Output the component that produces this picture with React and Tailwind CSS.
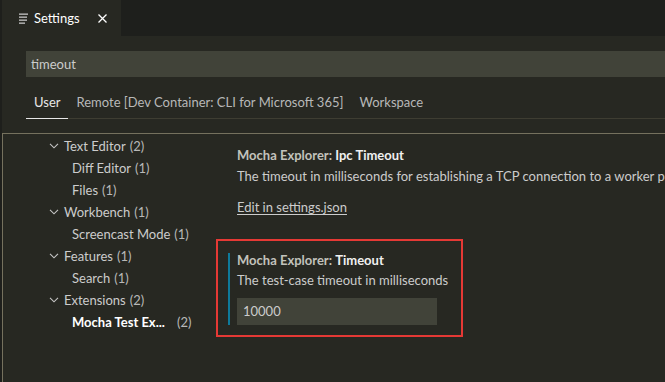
import React from "react";

const font = { fontFamily: 'Lato, "Noto Sans", sans-serif' };

function Chevron() {
  return (
    <svg width="10" height="6" viewBox="0 0 10 6" className="shrink-0">
      <path d="M1 0.8 L5 4.8 L9 0.8" fill="none" stroke="#c5c5c5" strokeWidth="1.1" />
    </svg>
  );
}

function TreeRow({ label, count, level, bold }) {
  return (
    <div className="h-[22px] flex items-center whitespace-nowrap">
      {level === 0 ? (
        <div className="flex items-center">
          <div className="w-[46px]" />
          <Chevron />
          <div className="w-[5px]" />
          <span className="text-[#cccccc]">{label}</span>
          <span className="text-[#b8b8b8] ml-[4px]">{count}</span>
        </div>
      ) : (
        <div className="flex items-center">
          <div className="w-[69px]" />
          {bold ? (
            <>
              <span className="text-white font-bold">{label}</span>
              <span className="text-[#b8b8b8] ml-[12px]">{count}</span>
            </>
          ) : (
            <>
              <span className="text-[#cccccc]">{label}</span>
              <span className="text-[#b8b8b8] ml-[4px]">{count}</span>
            </>
          )}
        </div>
      )}
    </div>
  );
}

export default function App() {
  const tree = [
    { label: "Text Editor", count: "(2)", level: 0 },
    { label: "Diff Editor", count: "(1)", level: 1 },
    { label: "Files", count: "(1)", level: 1 },
    { label: "Workbench", count: "(1)", level: 0 },
    { label: "Screencast Mode", count: "(1)", level: 1 },
    { label: "Features", count: "(1)", level: 0 },
    { label: "Search", count: "(1)", level: 1 },
    { label: "Extensions", count: "(2)", level: 0 },
    { label: "Mocha Test Ex...", count: "(2)", level: 1, bold: true },
  ];
  return (
    <div
      className="w-[665px] h-[382px] flex bg-[#272822] overflow-hidden text-[13px] leading-[17px]"
      style={font}
    >
      <div className="w-[2px] bg-[#1e1f1c] shrink-0" />
      <div className="flex-1 flex flex-col min-w-0">
        {/* tab bar */}
        <div className="h-[36px] bg-[#1e1f1c] flex shrink-0">
          <div className="w-[119px] bg-[#272822] flex items-center">
            <svg width="10" height="11" viewBox="0 0 10 11" className="ml-[17px]">
              <rect x="0" y="0.5" width="9" height="1.3" fill="#c5c5c5" />
              <rect x="0" y="3.5" width="8" height="1.3" fill="#c5c5c5" />
              <rect x="0" y="6.5" width="8" height="1.3" fill="#c5c5c5" />
              <rect x="0" y="9.5" width="6" height="1.3" fill="#c5c5c5" />
            </svg>
            <span className="text-white ml-[5px]">Settings</span>
            <svg width="9" height="9" viewBox="0 0 9 9" className="ml-[18px]">
              <path d="M0.5 0.5 L8.5 8.5 M8.5 0.5 L0.5 8.5" stroke="#ffffff" strokeWidth="1.3" />
            </svg>
          </div>
        </div>
        {/* search */}
        <div className="mt-[15px] ml-[24px] h-[26px] bg-[#414339] flex items-center pl-[5px] text-[#cccccc] shrink-0">
          timeout
        </div>
        {/* scope tabs */}
        <div className="ml-[24px] h-[42px] flex items-end border-b border-[#3e3d32] shrink-0">
          <div className="px-[8px] pb-[7px] -mb-px border-b border-[#e7e7e7] text-[#e7e7e7]">User</div>
          <div className="px-[8px] pb-[7px] text-[#b8b8b8]">Remote [Dev Container: CLI for Microsoft 365]</div>
          <div className="px-[8px] pb-[7px] text-[#b8b8b8]">Workspace</div>
        </div>
        {/* content */}
        <div className="mt-[14px] flex-1 border-l border-t border-[#75715e] flex min-h-0">
          <div className="w-[213px] shrink-0 flex flex-col pt-[1px]">
            {tree.map((t, i) => (
              <TreeRow key={i} {...t} />
            ))}
          </div>
          <div className="flex-1 min-w-0 flex flex-col">
            <div className="pl-[21px] pt-[12px] whitespace-nowrap">
              <div className="h-[18px] flex items-center font-bold">
                <span className="text-[#c2c2bc]">Mocha Explorer:&nbsp;</span>
                <span className="text-[#f0f0f0]">Ipc Timeout</span>
              </div>
              <div className="mt-[4px] text-[#cccccc]">
                The timeout in milliseconds for establishing a TCP connection to a worker process
              </div>
              <div className="mt-[14px] text-[#cccccc] underline underline-offset-2">Edit in settings.json</div>
            </div>
            <div className="mt-[23px] w-[247px] h-[98px] border-2 border-[#e53935] pt-[12px] pl-[10px]">
              <div className="flex h-[72px]">
                <div className="w-[2px] bg-[#0e7a9b]" />
                <div className="pl-[7px] flex flex-col">
                  <div className="h-[15px] flex items-center font-bold whitespace-nowrap">
                    <span className="text-[#c2c2bc]">Mocha Explorer:&nbsp;</span>
                    <span className="text-[#f0f0f0]">Timeout</span>
                  </div>
                  <div className="mt-[4px] text-[#cccccc] whitespace-nowrap">The test-case timeout in milliseconds</div>
                  <div className="mt-[9px] w-[200px] h-[27px] bg-[#414339] flex items-center pl-[6px] text-[#cccccc]">
                    10000
                  </div>
                </div>
              </div>
            </div>
          </div>
        </div>
      </div>
    </div>
  );
}
